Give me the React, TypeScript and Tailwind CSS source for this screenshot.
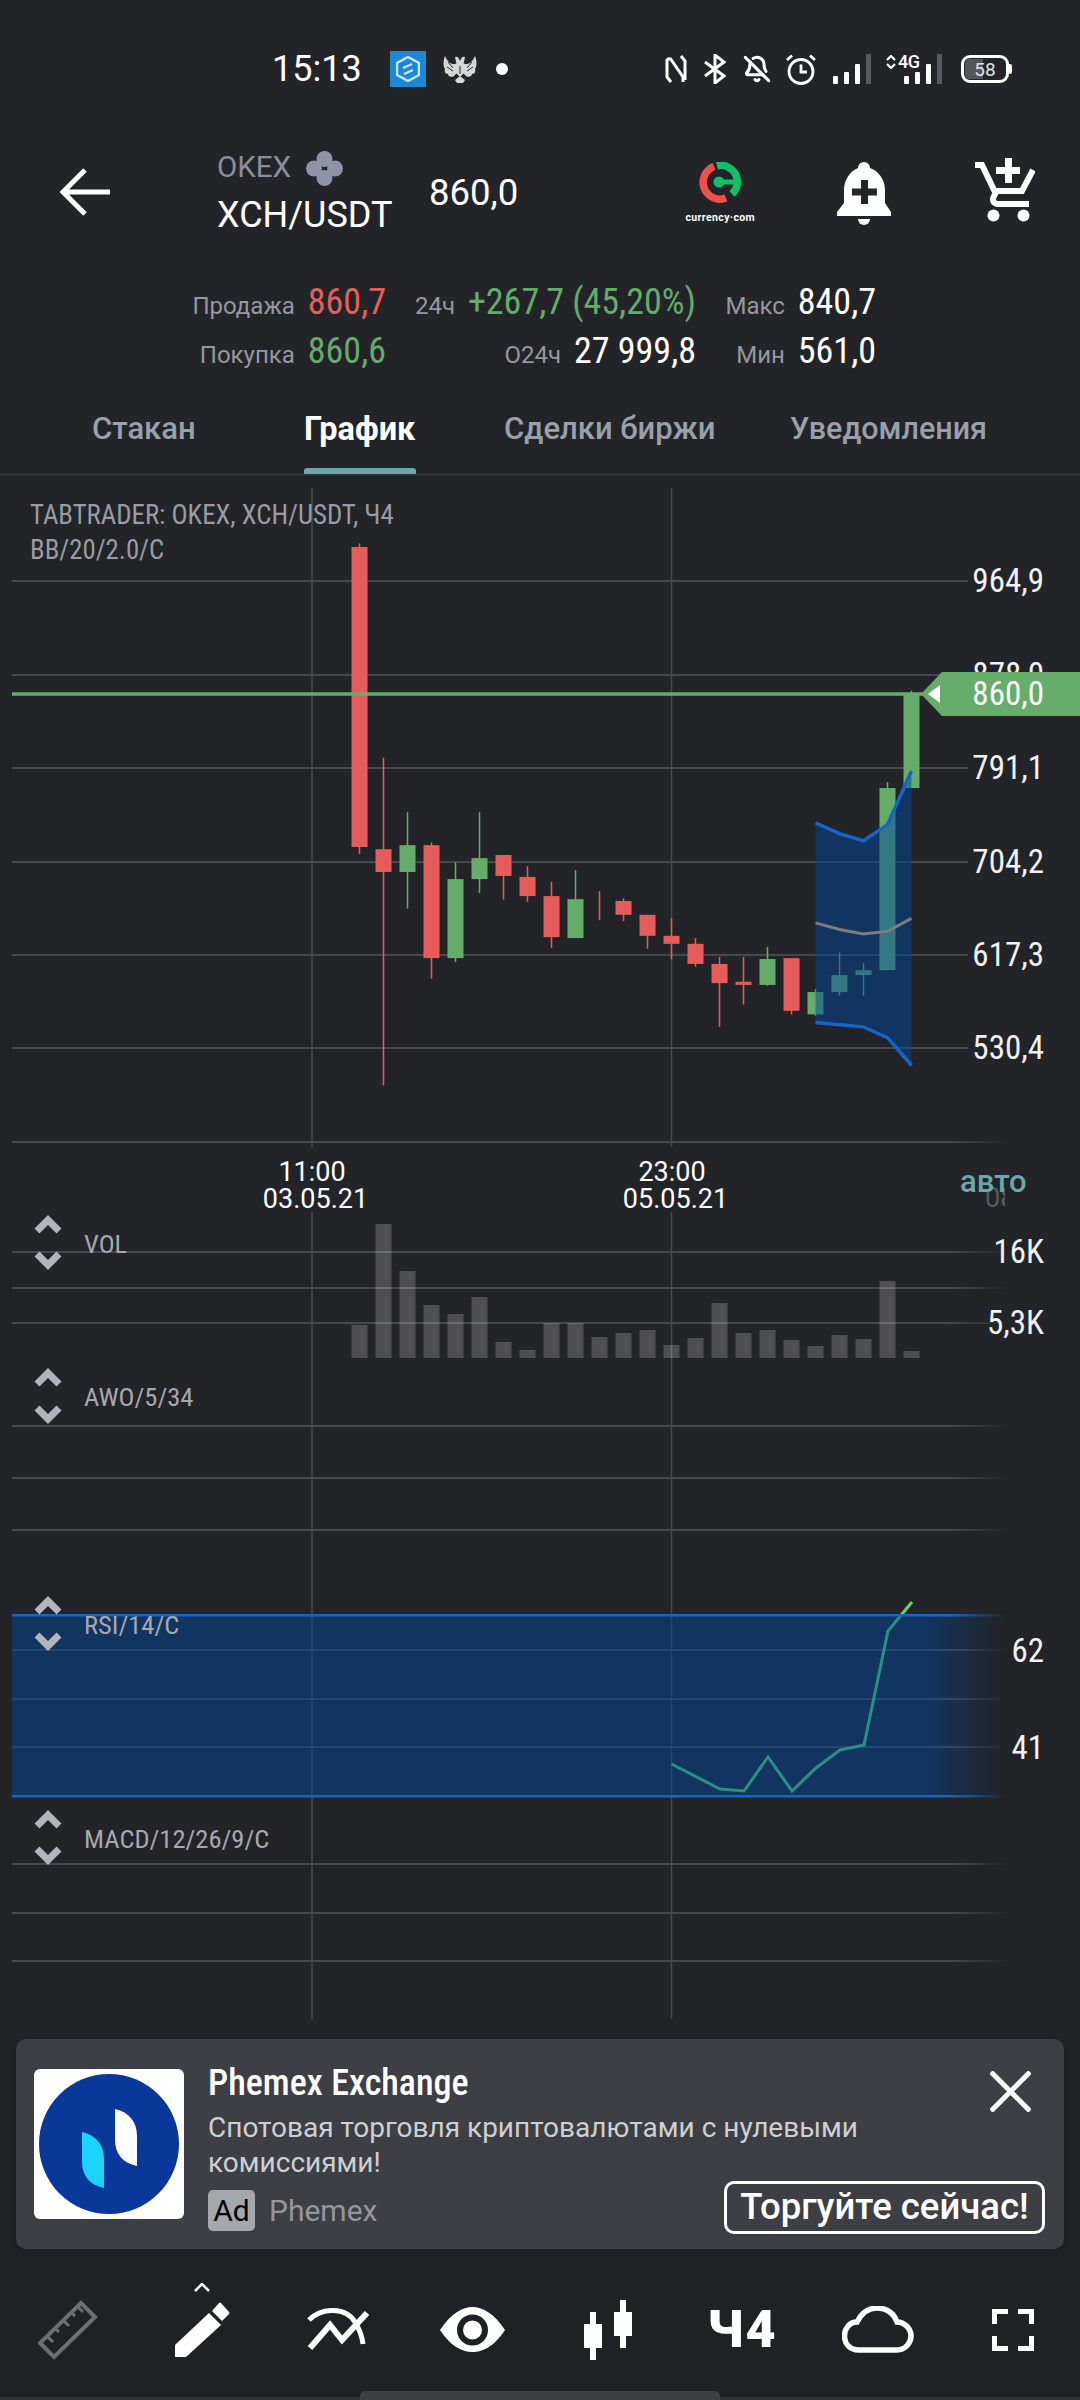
import type { ReactNode } from 'react';
import { BellOff } from 'lucide-react';

const RED = '#e65c5a';
const GREEN = '#66ad6c';

// wick top, wick bottom, body top, body bottom, up?
const CANDLES: [number, number, number, number, boolean][] = [
  [142, 838, 150, 822, false],
  [622, 1356, 827, 878, false],
  [744, 960, 818, 878, true],
  [812, 1117, 818, 1071, false],
  [857, 1080, 894, 1071, true],
  [744, 925, 847, 894, true],
  [840, 940, 840, 887, false],
  [865, 945, 889, 932, false],
  [900, 1048, 932, 1024, false],
  [874, 1026, 939, 1026, true],
  [921, 986, 921, 921, false],
  [937, 988, 943, 974, false],
  [974, 1050, 974, 1021, false],
  [982, 1074, 1021, 1039, false],
  [1026, 1090, 1039, 1084, false],
  [1068, 1225, 1084, 1127, false],
  [1068, 1175, 1124, 1131, false],
  [1046, 1133, 1073, 1131, true],
  [1071, 1197, 1071, 1189, false],
  [1140, 1200, 1147, 1197, true],
  [1058, 1155, 1109, 1147, true],
  [1082, 1155, 1098, 1109, true],
  [677, 1098, 690, 1098, true],
  [472, 690, 477, 690, true],
];

const VOLUME_TOPS = [1325, 1224, 1271, 1305, 1314, 1297, 1342, 1350, 1323, 1323, 1337, 1333, 1330, 1345, 1338, 1303, 1333, 1330, 1340, 1346, 1335, 1339, 1281, 1351];

const candleX = (i: number) => 359.5 + 24 * i;
const chartY = (v: number) => 480 + v / 2.24;

const BB_UPPER = [768, 792, 808, 772, 652];
const BB_MID = [992, 1007, 1017, 1011, 982];
const BB_LOWER = [1215, 1220, 1225, 1249, 1311];
const bbPoints = (vals: number[]) => vals.map((v, i) => `${candleX(19 + i)},${chartY(v)}`).join(' ');

const RSI_LINE = '671.5,1764 720,1789 744,1791 768,1757 792,1791 816,1768 840,1750 864,1745 888,1631 912,1602';

const MAIN_GRID = [581, 675, 768, 862, 955, 1048];
const FADED_GRID = [1142, 1252, 1288, 1323, 1426, 1478, 1530, 1650, 1699, 1747, 1864, 1913, 1961];
const CHEVRONS = [
  [1216, 1252],
  [1369, 1406],
  [1597, 1633],
  [1811, 1847],
];

const PRICE_LABELS = [
  { y: 581, text: '964,9' },
  { y: 675, text: '878,0' },
  { y: 768, text: '791,1' },
  { y: 862, text: '704,2' },
  { y: 955, text: '617,3' },
  { y: 1048, text: '530,4' },
  { y: 1252, text: '16K' },
  { y: 1323, text: '5,3K' },
  { y: 1651, text: '62' },
  { y: 1748, text: '41' },
];

const PANE_LABELS = [
  { y: 1244, text: 'VOL' },
  { y: 1397, text: 'AWO/5/34' },
  { y: 1625, text: 'RSI/14/C' },
  { y: 1839, text: 'MACD/12/26/9/C' },
];

const ChartSvg = () => (
  <svg viewBox="0 476 1080 1563" className="block w-full h-full">
    <defs>
      <linearGradient id="fadeRight" gradientUnits="userSpaceOnUse" x1="950" y1="0" x2="1010" y2="0">
        <stop offset="0" stopColor="#fff" />
        <stop offset="1" stopColor="#000" />
      </linearGradient>
      <linearGradient id="bandFill" gradientUnits="userSpaceOnUse" x1="925" y1="0" x2="1003" y2="0">
        <stop offset="0" stopColor="#00449a" stopOpacity="0.5" />
        <stop offset="1" stopColor="#00449a" stopOpacity="0" />
      </linearGradient>
      <linearGradient id="bandEdge" gradientUnits="userSpaceOnUse" x1="950" y1="0" x2="1006" y2="0">
        <stop offset="0" stopColor="#1565c8" />
        <stop offset="1" stopColor="#1565c8" stopOpacity="0" />
      </linearGradient>
      <mask id="gridFade" maskUnits="userSpaceOnUse" x="0" y="476" width="1080" height="1563">
        <rect x="0" y="476" width="1080" height="1563" fill="url(#fadeRight)" />
      </mask>
    </defs>

    {/* grid */}
    <g stroke="#47484c" strokeWidth="1.5">
      <line x1="312" y1="488" x2="312" y2="1147" />
      <line x1="312" y1="1212" x2="312" y2="2019" />
      <line x1="671.5" y1="488" x2="671.5" y2="1147" />
      <line x1="671.5" y1="1212" x2="671.5" y2="2019" />
    </g>
    <g stroke="#47484c" strokeWidth="2">
      {MAIN_GRID.map((y) => (
        <line key={y} x1="12" y1={y} x2="968" y2={y} />
      ))}
    </g>
    <g stroke="#47484c" strokeWidth="2" mask="url(#gridFade)">
      {FADED_GRID.map((y) => (
        <line key={y} x1="12" y1={y} x2="1010" y2={y} />
      ))}
    </g>

    {/* price candles */}
    {CANDLES.map(([wt, wb, bt, bb, up], i) => (
      <g key={i} fill={up ? GREEN : RED}>
        <rect x={candleX(i) - 0.75} y={chartY(wt)} width="1.5" height={(wb - wt) / 2.24} />
        {bb > bt && <rect x={candleX(i) - 8} y={chartY(bt)} width="16" height={(bb - bt) / 2.24} />}
      </g>
    ))}

    {/* bollinger bands */}
    <polygon points={`${bbPoints(BB_UPPER)} ${bbPoints(BB_LOWER).split(' ').reverse().join(' ')}`} fill="#00449a" fillOpacity="0.5" />
    <polyline points={bbPoints(BB_MID)} fill="none" stroke="#7b7d7f" strokeWidth="3" />
    <polyline points={bbPoints(BB_UPPER)} fill="none" stroke="#1565c8" strokeWidth="3.5" />
    <polyline points={bbPoints(BB_LOWER)} fill="none" stroke="#1565c8" strokeWidth="3.5" />

    {/* last price */}
    <line x1="12" y1="694" x2="925" y2="694" stroke={GREEN} strokeWidth="3.5" />

    {/* volume */}
    {VOLUME_TOPS.map((top, i) => (
      <rect key={i} x={candleX(i) - 8} y={top} width="16" height={1358 - top} fill="#ffffff" fillOpacity="0.2" />
    ))}

    {/* rsi */}
    <polyline points={RSI_LINE} fill="none" stroke="#55da70" strokeWidth="3" />
    <rect x="12" y="1615" width="991" height="181" fill="url(#bandFill)" />
    <rect x="12" y="1614" width="994" height="2.5" fill="url(#bandEdge)" />
    <rect x="12" y="1795" width="994" height="2.5" fill="url(#bandEdge)" />

    {/* pane up / down handles */}
    <g fill="none" stroke="#b3b5bc" strokeWidth="7">
      {CHEVRONS.map(([up, down]) => (
        <g key={up}>
          <polyline points={`37,${up + 15} 48,${up + 4} 59,${up + 15}`} />
          <polyline points={`37,${down + 2} 48,${down + 13} 59,${down + 2}`} />
        </g>
      ))}
    </g>
  </svg>
);

// chart panel starts at y 476 in the page
const Chart = () => (
  <div className="relative h-[1563px] overflow-hidden">
    <ChartSvg />
    <div className="absolute left-[30px] top-[22px] text-[26.8px] leading-[35px] text-[#9a9ca1] [font-stretch:87%] whitespace-nowrap">
      <div>TABTRADER: OKEX, XCH/USDT, Ч4</div>
      <div>BB/20/2.0/C</div>
    </div>
    {PRICE_LABELS.map((l) => (
      <div
        key={l.text}
        className="absolute right-[36px] text-[33px] leading-[40px] text-[#f1f1f1] [font-stretch:87%]"
        style={{ top: l.y - 476 - 20 }}
      >
        {l.text}
      </div>
    ))}
    {PANE_LABELS.map((l) => (
      <div
        key={l.text}
        className="absolute left-[84px] text-[26.5px] leading-[30px] text-[#a6a8ae] [font-stretch:87%]"
        style={{ top: l.y - 476 - 15 }}
      >
        {l.text}
      </div>
    ))}
    {/* current price flag */}
    <div className="absolute right-0 top-[196px] w-[159px] h-[44px] bg-[#66ad6c] [clip-path:polygon(0_50%,21px_0,100%_0,100%_100%,21px_100%)] flex items-center justify-end pr-[36px] text-[33px] text-white [font-stretch:87%]">
      860,0
    </div>
    <div className="absolute left-[928px] top-[209px] w-[12px] h-[18px] bg-white [clip-path:polygon(0_50%,100%_0,100%_100%)]" />
    {/* time axis */}
    <div className="absolute left-[252px] w-[120px] top-[683px] text-center text-[27px] leading-[27px] text-white">
      <div>11:00</div>
      <div className="ml-[7px]">03.05.21</div>
    </div>
    <div className="absolute left-[612px] w-[120px] top-[683px] text-center text-[27px] leading-[27px] text-white">
      <div>23:00</div>
      <div className="ml-[7px]">05.05.21</div>
    </div>
    <div className="absolute left-[985px] top-[708px] w-[20px] h-[26px] overflow-hidden text-[27px] leading-[28px] text-[#5a5b60]">08</div>
    <div className="absolute left-[960px] top-[686px] text-[31px] leading-[40px] font-medium text-[#6aa8ab]">авто</div>
  </div>
);

const NfcIcon = () => (
  <svg width="22" height="28" viewBox="0 0 22 28" fill="none" stroke="#fff" strokeWidth="3">
    <path d="M5 3 L18 22 V27 M5 3 L2 5 V22 L6 27 M20 25 V6 L16 1" />
  </svg>
);

const BluetoothIcon = () => (
  <svg width="22" height="30" viewBox="0 0 22 30" fill="none" stroke="#fff" strokeWidth="3">
    <polyline points="1,8 20,22 11,29 11,1 20,8 1,22" />
  </svg>
);

const AlarmIcon = () => (
  <svg width="30" height="31" viewBox="0 0 30 31" fill="none" stroke="#fff" strokeWidth="2.8">
    <circle cx="15" cy="17.5" r="12" />
    <path d="M15 10.5 V18 H21 M1 6 L6 1.5 M29 6 L24 1.5" />
  </svg>
);

const SignalBars = () => (
  <svg width="38" height="30" viewBox="0 0 38 30" fill="#fff">
    <rect x="0" y="22" width="5" height="8" rx="1" />
    <rect x="11" y="18" width="5" height="12" rx="1" />
    <rect x="22" y="10" width="5" height="20" rx="1" />
    <rect x="33" y="0" width="5" height="30" fill="#5a5b60" />
  </svg>
);

const Eagle = () => (
  <svg width="34" height="30" viewBox="0 0 34 30" fill="#d6d6d6">
    <path d="M14 9 C10 12 5 9 2 2 C0 7 0 12 2 15 C1 17 2 20 5 20 C5 22 8 24 11 22 L14 19Z" />
    <path d="M20 9 C24 12 29 9 32 2 C34 7 34 12 32 15 C33 17 32 20 29 20 C29 22 26 24 23 22 L20 19Z" />
    <path d="M12 3 a3 3 0 0 1 4 2 l1 2 1-2 a3 3 0 0 1 4-2 l-1 5 -1 2 h-6 l-1-2Z" />
    <path d="M13 10 h8 v9 l-4 4 -4-4Z" />
    <path d="M12 26 l5-4 5 4 -2 3 h-6Z" />
    <path d="M5 8 l5 6 M4 13 l6 4 M29 8 l-5 6 M30 13 l-6 4 M17 12 v8" fill="none" stroke="#232428" strokeWidth="1" />
  </svg>
);

const StatusBar = () => (
  <div className="h-[138px] flex items-center text-white">
    <span className="ml-[272px] w-[118px] text-[36px] leading-none">15:13</span>
    <div className="w-[36px] h-[36px] bg-[#1e88d8] flex items-center justify-center">
      <svg width="24" height="26" viewBox="0 0 24 26" fill="none" stroke="#cfe6f8" strokeWidth="2.4">
        <path d="M12 1 L23 7 V19 L12 25 L1 19 V7 Z" />
        <path d="M16 8 L7 12 M17 14 L8 18" />
      </svg>
    </div>
    <div className="ml-[17px]">
      <Eagle />
    </div>
    <div className="ml-[19px] w-[12px] h-[12px] rounded-full bg-white" />
    <div className="ml-[157px]">
      <NfcIcon />
    </div>
    <div className="ml-[17px]">
      <BluetoothIcon />
    </div>
    <div className="ml-[17px]">
      <BellOff size={28} strokeWidth={2.6} color="#fff" />
    </div>
    <div className="ml-[15px]">
      <AlarmIcon />
    </div>
    <div className="ml-[17px]">
      <SignalBars />
    </div>
    <div className="relative ml-[15px] w-[56px] h-[30px]">
      <svg className="absolute left-0 top-[1px]" width="10" height="14" viewBox="0 0 10 14" fill="none" stroke="#fff" strokeWidth="2.2">
        <path d="M1 5 L5 1 L9 5 M1 9 L5 13 L9 9" />
      </svg>
      <span className="absolute left-[12px] top-[-1px] text-[18px] leading-[18px] font-medium tracking-[-0.5px]">4G</span>
      <div className="absolute right-0 top-0">
        <SignalBars />
      </div>
    </div>
    <div className="relative ml-[19px] w-[48px] h-[28px] rounded-[9px] border-[3px] border-white flex items-center justify-center">
      <div className="absolute left-[1px] top-[1px] bottom-[1px] w-[18px] rounded-l-[5px] bg-[#55565a]" />
      <span className="relative text-[19px] leading-none text-[#e2e2e2]">58</span>
      <div className="absolute right-[-6px] top-[6px] w-[3px] h-[10px] rounded-r-[2px] bg-white" />
    </div>
  </div>
);

const OkexMark = () => (
  <svg width="37" height="35" viewBox="0 0 37 35" fill="#8e94a6">
    <circle cx="18.5" cy="8" r="8" />
    <circle cx="18.5" cy="27" r="8" />
    <circle cx="8" cy="17.5" r="8" />
    <circle cx="29" cy="17.5" r="8" />
  </svg>
);

const CurrencyLogo = () => (
  <div className="flex flex-col items-center w-[68px]">
    <svg width="42" height="41" viewBox="0 0 42 41" fill="none" strokeWidth="7.5">
      <path d="M15 4.5 A16.5 16.5 0 0 0 27 36" stroke="#f0504c" />
      <path d="M18 3.8 A16.5 16.5 0 0 1 33 32" stroke="#12c06a" />
      <circle cx="20" cy="20" r="5.5" fill="#12c06a" stroke="none" />
      <rect x="20" y="17.5" width="16" height="5" fill="#12c06a" stroke="none" />
    </svg>
    <span className="mt-[9px] text-[10.5px] leading-[12px] font-bold tracking-[0.4px] text-white whitespace-nowrap">currency·com</span>
  </div>
);

const AlertBell = () => (
  <svg width="54" height="63" viewBox="0 0 54 63">
    <path fill="#fff" d="M27 0 a6 6 0 0 1 6 6 C42 9 48 18 48 28 V41 L54 50 V54 H0 V50 L7 41 V28 C7 18 13 9 21 6 A6 6 0 0 1 27 0Z" />
    <path fill="#fff" d="M21 57 H33 A6 6 0 0 1 21 57Z" />
    <path fill="#232428" d="M15 26.5 H24 V18 H31 V26.5 H40 V33.5 H31 V42 H24 V33.5 H15Z" />
  </svg>
);

const CartPlus = () => (
  <svg width="60" height="64" viewBox="0 0 60 64">
    <path fill="#fff" d="M21 9 H30 V0 H37 V9 H45 V16 H37 V25 H30 V16 H21Z" />
    <path fill="none" stroke="#fff" strokeWidth="6" d="M0 7 H7 L20 34 M58 12 L47 33 H22 Q14 44 22 46 H54" />
    <circle cx="18.5" cy="57.5" r="6" fill="#fff" />
    <circle cx="48.5" cy="57.5" r="6" fill="#fff" />
  </svg>
);

const Header = () => (
  <div className="h-[114px] flex items-center text-white">
    <svg className="ml-[60px] shrink-0 mt-[-7px]" width="50" height="48" viewBox="0 0 50 48" fill="none" stroke="#fff" strokeWidth="5">
      <path d="M50 24 H3 M25 2 L3 24 L25 46" />
    </svg>
    <div className="ml-[107px] w-[212px] shrink-0 mt-[-10px]">
      <div className="flex items-center h-[46px]">
        <span className="text-[29.5px] leading-none text-[#8a8f9c]">OKEX</span>
        <div className="ml-[15px]">
          <OkexMark />
        </div>
      </div>
      <div className="mt-[4px] text-[36px] leading-[40px]">XCH/USDT</div>
    </div>
    <span className="text-[36.5px] leading-none mt-[-4px]">860,0</span>
    <div className="ml-[168px] mt-[-4px]">
      <CurrencyLogo />
    </div>
    <div className="ml-[83px] mt-[-3px]">
      <AlertBell />
    </div>
    <div className="ml-[84px] mt-[-10px]">
      <CartPlus />
    </div>
  </div>
);

const Stat = ({ label, children, tone = 'text-white' }: { label: string; children: ReactNode; tone?: string }) => (
  <div className="h-[49px] flex items-baseline justify-end gap-[13px]">
    <span className="text-[24px] text-[#96989e]">{label}</span>
    <span className={`text-[36px] ${tone} [font-stretch:87%] whitespace-nowrap`}>{children}</span>
  </div>
);

const Stats = () => (
  <div className="h-[148px] flex pt-[26px] leading-[49px]">
    <div className="ml-[190px] w-[196px]">
      <Stat label="Продажа" tone="text-[#e35f5e]">860,7</Stat>
      <Stat label="Покупка" tone="text-[#63ac6d]">860,6</Stat>
    </div>
    <div className="w-[310px]">
      <Stat label="24ч" tone="text-[#63ac6d]">+267,7 (45,20%)</Stat>
      <Stat label="О24ч">27 999,8</Stat>
    </div>
    <div className="w-[180px]">
      <Stat label="Макс">840,7</Stat>
      <Stat label="Мин">561,0</Stat>
    </div>
  </div>
);

const Tabs = () => (
  <div className="relative h-[76px] border-b-[3px] border-[#2f3034] text-[#9aa0aa] text-[31px] font-medium">
    <span className="absolute left-[92px] top-[9px] leading-[40px]">Стакан</span>
    <span className="absolute left-[304px] top-[9px] leading-[40px] text-[32.5px] font-bold text-white">График</span>
    <span className="absolute left-[504px] top-[9px] leading-[40px]">Сделки биржи</span>
    <span className="absolute left-[790px] top-[9px] leading-[40px] text-[30.5px]">Уведомления</span>
    <div className="absolute left-[304px] bottom-[-1px] w-[112px] h-[6px] rounded-t-[3px] bg-[#6aa8ab]" />
  </div>
);

const AdBanner = () => (
  <div className="ml-[16px] w-[1048px] h-[210px] rounded-[10px] bg-[#3d3f44] shadow-[0_4px_12px_rgba(0,0,0,0.35)] flex pl-[18px] pr-[19px]">
    <div className="mt-[30px] w-[150px] h-[150px] rounded-[6px] bg-white flex items-center justify-center">
      <svg width="140" height="140" viewBox="0 0 140 140">
        <circle cx="70" cy="70" r="70" fill="#0a389a" />
        <path fill="#fff" d="M76 35 C90 38 98 48 98 62 V92 C84 89 76 80 76 66Z" />
        <path fill="#1ad4fb" d="M43 58 C57 61 65 71 65 85 V114 C51 111 43 102 43 88Z" />
      </svg>
    </div>
    <div className="ml-[24px] flex-1 min-w-0">
      <div className="mt-[22px] h-[44px] flex items-center justify-between pr-[14px]">
        <span className="text-[36px] leading-none font-medium text-white [font-stretch:87%] whitespace-nowrap">Phemex Exchange</span>
        <svg className="mt-[17px]" width="41" height="41" viewBox="0 0 41 41" fill="none" stroke="#fff" strokeWidth="5">
          <path d="M1 1 L40 40 M40 1 L1 40" />
        </svg>
      </div>
      <div className="mt-[5px] text-[28px] leading-[35px] text-[#cfd0d2]">
        Спотовая торговля криптовалютами с нулевыми
        <br />
        комиссиями!
      </div>
      <div className="mt-[1px] flex justify-between">
        <div className="mt-[9px] flex items-center h-[41px]">
          <span className="w-[47px] h-[41px] rounded-[5px] bg-[#a5a7aa] text-black text-[30px] leading-[41px] text-center">Ad</span>
          <span className="ml-[14px] text-[30px] leading-none text-[#95979b]">Phemex</span>
        </div>
        <div className="w-[321px] h-[53px] rounded-[10px] border-[3px] border-white flex items-center justify-center text-[36.5px] font-medium text-white">
          Торгуйте сейчас!
        </div>
      </div>
    </div>
  </div>
);

const Toolbar = () => (
  <div className="relative flex-1 bg-[#202125] grid grid-cols-8 items-center pt-[11px]">
    <div className="flex justify-center">
      <svg width="60" height="60" viewBox="39 2300 60 60" fill="none" stroke="#6e6f73">
        <path strokeWidth="4" d="M82 2303 L96 2317 L55 2357 L41 2343Z" />
        <path strokeWidth="3" d="M48 2336 L54 2342 M56 2328 L60 2332 M64 2320 L70 2326 M72 2312 L76 2316 M78 2306 L84 2312" />
      </svg>
    </div>
    <div className="flex justify-center">
      <svg width="56" height="94" viewBox="176 2283 56 94" fill="#fff">
        <path d="M176 2345 L210 2313 L222 2325 L187 2357 H176Z" />
        <path d="M213 2311 L220 2303 Q221 2302 222 2303 L230 2312 Q231 2313 230 2314 L223 2321Z" />
        <path fill="none" stroke="#fff" strokeWidth="2.5" d="M196 2291 L203 2284 L210 2291" />
      </svg>
    </div>
    <div className="flex justify-center">
      <svg width="62" height="44" viewBox="307 2308 62 44" fill="none" stroke="#fff" strokeWidth="5">
        <path d="M309 2320 C322 2307 346 2307 355 2322 C360 2330 362 2336 363 2344" />
        <path strokeWidth="6" d="M310 2348 L330 2325 L342 2340 L367 2313" />
      </svg>
    </div>
    <div className="flex justify-center">
      <svg width="65" height="46" viewBox="441 2307 65 46">
        <path fill="#fff" d="M441 2330 C452 2313 464 2307 473.5 2307 C483 2307 495 2313 506 2330 C495 2347 483 2352 473.5 2352 C464 2352 452 2347 441 2330Z" />
        <circle cx="473.5" cy="2330" r="12.5" fill="none" stroke="#202125" strokeWidth="6" />
      </svg>
    </div>
    <div className="flex justify-center">
      <svg width="48" height="60" viewBox="584 2300 48 60" fill="#fff">
        <path d="M590 2312 H596 V2324 H602 V2348 H596 V2360 H590 V2348 H584 V2324 H590Z" />
        <path d="M620 2300 H626 V2312 H632 V2336 H626 V2348 H620 V2336 H614 V2312 H620Z" />
      </svg>
    </div>
    <div className="flex justify-center text-[52px] leading-none font-black text-white tracking-[2px]">Ч4</div>
    <div className="flex justify-center">
      <svg width="72" height="48" viewBox="843 2306 72 48" fill="none" stroke="#fff" strokeWidth="5.5">
        <path d="M860 2350 H898 C907 2350 912 2342 912 2336 C912 2328 905 2322 898 2322 C895 2313 887 2308 878 2308 C869 2308 862 2314 858 2322 C850 2322 845.5 2329 845.5 2336 C845.5 2344 851 2350 860 2350Z" />
      </svg>
    </div>
    <div className="flex justify-center">
      <svg width="42" height="42" viewBox="992 2309 42 42" fill="none" stroke="#fff" strokeWidth="5">
        <path d="M994.5 2324 V2311.5 H1008 M1018 2311.5 H1031.5 V2324 M994.5 2336 V2348.5 H1008 M1018 2348.5 H1031.5 V2336" />
      </svg>
    </div>
    {/* gesture bar */}
    <div className="absolute left-0 right-0 bottom-0 h-[3px] bg-[#303135]" />
    <div className="absolute left-[360px] bottom-0 w-[360px] h-[9px] rounded-t-[5px] bg-[#3e3f43]" />
  </div>
);

export default function App() {
  return (
    <div className="w-[1080px] h-[2400px] flex flex-col overflow-hidden bg-[#232428] [font-family:Roboto,sans-serif]">
      <StatusBar />
      <Header />
      <Stats />
      <Tabs />
      <Chart />
      <AdBanner />
      <Toolbar />
    </div>
  );
}
